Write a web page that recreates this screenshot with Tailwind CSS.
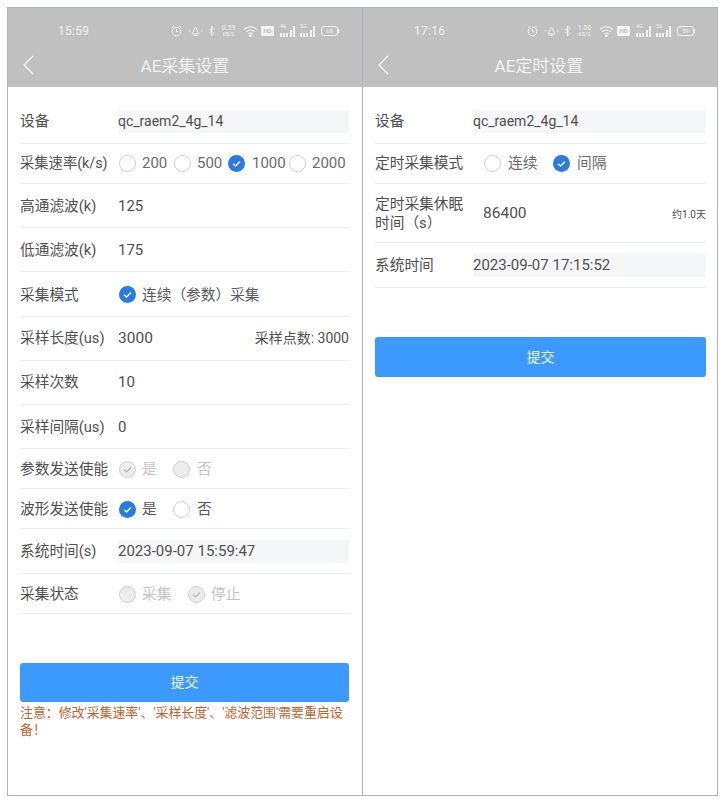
<!DOCTYPE html>
<html lang="zh">
<head>
<meta charset="utf-8">
<script src="https://cdn.jsdelivr.net/npm/@tailwindcss/browser@4"></script>
<title>AE</title>
</head>
<body class="bg-white">
<div class="flex w-[723px] h-[802px] pl-[7px] pt-[7px] font-['Roboto','Noto_Sans_CJK_SC',sans-serif] text-[14.7px] text-[#505050]">

<!-- LEFT PHONE -->
<section class="w-[355px] h-[789px] border border-[#aeb4bb] border-r-0 bg-white flex flex-col">
  <header class="bg-[#c0c0c0] h-[79px] shrink-0 text-[#f1f1f1]">
    <div class="flex items-center h-[44px] pl-[50px] pt-[1px]">
      <span class="text-[12px] w-[113px] tracking-[0.3px]">15:59</span>
      <div class="flex items-center h-[14px]">
        <svg class="w-[11px] h-[12px] mr-[6px]" viewBox="0 0 11 12" fill="none" stroke="#f1f1f1" stroke-width="1"><circle cx="5.500" cy="6.500" r="4.300"/><path d="M5.500 4v2.700h2M1 2.500 2.800 1M10 2.500 8.200 1"/></svg>
        <svg class="w-[15px] h-[12px] mr-[5px]" viewBox="0 0 15 12" fill="none" stroke="#f1f1f1" stroke-width="1"><path d="M4 9 7.500 2 11 9ZM1.500 5v2M13.500 5v2M6 10.500h3"/></svg>
        <svg class="w-[7px] h-[12px] mr-[5px]" viewBox="0 0 7 12" fill="none" stroke="#f1f1f1" stroke-width="1"><path d="M1 3.500 6 8.500 3.500 11V1L6 3.500 1 8.500"/></svg>
        <div class="w-[17px] mr-[6px] flex flex-col items-center leading-[6px] text-[7px]"><span>0.59</span><span class="text-[5px]">KB/S</span></div>
        <svg class="w-[15px] h-[12px] mr-[3px]" viewBox="0 0 15 12" fill="none" stroke="#f1f1f1" stroke-width="1.100"><path d="M1 4.500C4.500 1 10.500 1 14 4.500M3.200 6.800C5.500 4.600 9.500 4.600 11.800 6.800M5.400 9C6.500 8 8.500 8 9.600 9"/><circle cx="7.500" cy="10.800" r=".8" fill="#f1f1f1"/></svg>
        <div class="w-[13px] h-[10px] mr-[6px] bg-[#f1f1f1] rounded-[1px] flex items-center justify-center text-[6px] leading-none text-[#c0c0c0] font-bold">HD</div>
        <div class="w-[15px] h-[12px] mr-[5px] flex items-end gap-[1.5px] relative"><span class="absolute left-0 top-[-1px] text-[5px] leading-none">4G</span><i class="block w-[1.500px] h-[4px] bg-[#f1f1f1]"></i><i class="block w-[1.500px] h-[4px] bg-[#f1f1f1]"></i><i class="block w-[1.500px] h-[4px] bg-[#f1f1f1]"></i><i class="block w-[1.500px] h-[7px] bg-[#f1f1f1] ml-[1px]"></i><i class="block w-[1.500px] h-[11px] bg-[#f1f1f1]"></i></div>
        <div class="w-[15px] h-[12px] mr-[6px] flex items-end gap-[1.5px] relative"><span class="absolute left-0 top-[-1px] text-[5px] leading-none">5G</span><i class="block w-[1.500px] h-[4px] bg-[#f1f1f1]"></i><i class="block w-[1.500px] h-[4px] bg-[#f1f1f1]"></i><i class="block w-[1.500px] h-[4px] bg-[#f1f1f1]"></i><i class="block w-[1.500px] h-[7px] bg-[#f1f1f1] ml-[1px]"></i><i class="block w-[1.500px] h-[11px] bg-[#f1f1f1]"></i></div>
        <div class="w-[17px] h-[10px] border border-[#f1f1f1] rounded-[3px] flex items-center justify-center text-[6px] leading-none">68</div><i class="block w-[1px] h-[4px] bg-[#f1f1f1]"></i>
      </div>
    </div>
    <div class="relative flex items-center justify-center h-[27px] pt-[2px] text-[17px] leading-none">
      <svg class="absolute left-[15px] top-[3px] w-[11px] h-[20px]" viewBox="0 0 11 20" fill="none" stroke="#f5f5f5" stroke-width="1.300"><path d="M10 1 1 10l9 9"/></svg>
      <span>AE采集设置</span>
    </div>
  </header>
  <div class="pt-[13px] pl-[12px] pr-[13px] flex flex-col flex-1">
    <div class="flex items-center h-[44px] border-b border-[#eeeeee]"><span class="w-[98px] shrink-0">设备</span><div class="flex-1 h-[23px] bg-[#f5f6f8] flex items-center text-[14px]">qc_raem2_4g_14</div></div>
    <div class="flex items-center h-[40px] border-b border-[#eeeeee] text-[#6b6b6b] text-[15px]"><span class="w-[98px] shrink-0 text-[#505050] text-[14.300px]">采集速率(k/s)</span>
      <div class="flex items-center pl-[1px]">
        <i class="block w-[17px] h-[17px] rounded-full border border-[#cfcfcf] mr-[6px]"></i><span class="w-[32px]">200</span>
        <i class="block w-[17px] h-[17px] rounded-full border border-[#cfcfcf] mr-[6px]"></i><span class="w-[31px]">500</span>
        <svg class="w-[17px] h-[17px] mr-[7px]" viewBox="0 0 17 17"><circle cx="8.500" cy="8.500" r="8.500" fill="#2a7ae4"/><path d="M5 8.700l2.500 2.300L12 6.500" fill="none" stroke="#fff" stroke-width="1.400"/></svg><span class="w-[37px]">1000</span>
        <i class="block w-[17px] h-[17px] rounded-full border border-[#cfcfcf] mr-[6px]"></i><span>2000</span>
      </div>
    </div>
    <div class="flex items-center h-[44px] pt-[2px] border-b border-[#eeeeee]"><span class="w-[98px] shrink-0">高通滤波(k)</span><span class="text-[15px]">125</span></div>
    <div class="flex items-center h-[44px] pt-[2px] border-b border-[#eeeeee]"><span class="w-[98px] shrink-0">低通滤波(k)</span><span class="text-[15px]">175</span></div>
    <div class="flex items-center h-[45px] pt-[2px] border-b border-[#eeeeee]"><span class="w-[98px] shrink-0">采集模式</span>
      <div class="flex items-center pl-[1px]"><svg class="w-[17px] h-[17px] mr-[6px]" viewBox="0 0 17 17"><circle cx="8.500" cy="8.500" r="8.500" fill="#2a7ae4"/><path d="M5 8.700l2.500 2.300L12 6.500" fill="none" stroke="#fff" stroke-width="1.400"/></svg><span class="text-[#5a5a5a]">连续（参数）采集</span></div>
    </div>
    <div class="flex items-center h-[44px] border-b border-[#eeeeee]"><span class="w-[98px] shrink-0">采样长度(us)</span><span class="text-[15.500px]">3000</span><span class="ml-auto text-[14px]">采样点数: 3000</span></div>
    <div class="flex items-center h-[44px] border-b border-[#eeeeee]"><span class="w-[98px] shrink-0">采样次数</span><span class="text-[15px]">10</span></div>
    <div class="flex items-center h-[44px] pt-[2px] border-b border-[#eeeeee]"><span class="w-[98px] shrink-0">采样间隔(us)</span><span class="text-[15px]">0</span></div>
    <div class="flex items-center h-[40px] pt-[2px] border-b border-[#eeeeee]"><span class="w-[98px] shrink-0">参数发送使能</span>
      <div class="flex items-center pl-[1px] text-[#c4c4c4]">
        <svg class="w-[17px] h-[17px] mr-[6px]" viewBox="0 0 17 17"><circle cx="8.500" cy="8.500" r="8" fill="#ececec" stroke="#cfcfcf"/><path d="M5 8.700l2.500 2.300L12 6.500" fill="none" stroke="#b5b5b5" stroke-width="1.200"/></svg><span class="w-[31px]">是</span>
        <i class="block w-[17px] h-[17px] rounded-full border border-[#cfcfcf] bg-[#ececec] mr-[7px]"></i><span>否</span>
      </div>
    </div>
    <div class="flex items-center h-[40px] pt-[2px] border-b border-[#eeeeee]"><span class="w-[98px] shrink-0">波形发送使能</span>
      <div class="flex items-center pl-[1px] text-[#5a5a5a]">
        <svg class="w-[17px] h-[17px] mr-[6px]" viewBox="0 0 17 17"><circle cx="8.500" cy="8.500" r="8.500" fill="#2a7ae4"/><path d="M5 8.700l2.500 2.300L12 6.500" fill="none" stroke="#fff" stroke-width="1.400"/></svg><span class="w-[31px]">是</span>
        <i class="block w-[17px] h-[17px] rounded-full border border-[#cfcfcf] mr-[7px]"></i><span>否</span>
      </div>
    </div>
    <div class="flex items-center h-[45px] border-b border-[#eeeeee]"><span class="w-[98px] shrink-0">系统时间(s)</span><div class="flex-1 h-[23px] bg-[#f5f6f8] flex items-center text-[15px]">2023-09-07 15:59:47</div></div>
    <div class="flex items-center h-[40px] pt-[2px] border-b border-[#eeeeee]"><span class="w-[98px] shrink-0">采集状态</span>
      <div class="flex items-center pl-[1px] text-[#c4c4c4]">
        <i class="block w-[17px] h-[17px] rounded-full border border-[#cfcfcf] bg-[#ececec] mr-[6px]"></i><span class="w-[46px]">采集</span>
        <svg class="w-[17px] h-[17px] mr-[6px]" viewBox="0 0 17 17"><circle cx="8.500" cy="8.500" r="8" fill="#ececec" stroke="#cfcfcf"/><path d="M5 8.700l2.500 2.300L12 6.500" fill="none" stroke="#b5b5b5" stroke-width="1.200"/></svg><span>停止</span>
      </div>
    </div>
    <button class="mt-[49px] h-[39px] w-full shrink-0 bg-[#3c9aff] rounded-[3px] text-white/90 text-[14px]">提交</button>
    <p class="mt-[2px] text-[13px] leading-[17px] tracking-[-0.1px] text-[#c4622d]">注意：修改'采集速率'、'采样长度'、'滤波范围'需要重启设备！</p>
  </div>
</section>

<!-- RIGHT PHONE -->
<section class="w-[356px] h-[789px] border border-[#aeb4bb] bg-white flex flex-col">
  <header class="bg-[#c0c0c0] h-[79px] shrink-0 text-[#f1f1f1]">
    <div class="flex items-center h-[44px] pl-[51px] pt-[1px]">
      <span class="text-[12px] w-[113px] tracking-[0.3px]">17:16</span>
      <div class="flex items-center h-[14px]">
        <svg class="w-[11px] h-[12px] mr-[6px]" viewBox="0 0 11 12" fill="none" stroke="#f1f1f1" stroke-width="1"><circle cx="5.500" cy="6.500" r="4.300"/><path d="M5.500 4v2.700h2M1 2.500 2.800 1M10 2.500 8.200 1"/></svg>
        <svg class="w-[15px] h-[12px] mr-[5px]" viewBox="0 0 15 12" fill="none" stroke="#f1f1f1" stroke-width="1"><path d="M4 9 7.500 2 11 9ZM1.500 5v2M13.500 5v2M6 10.500h3"/></svg>
        <svg class="w-[7px] h-[12px] mr-[5px]" viewBox="0 0 7 12" fill="none" stroke="#f1f1f1" stroke-width="1"><path d="M1 3.500 6 8.500 3.500 11V1L6 3.500 1 8.500"/></svg>
        <div class="w-[17px] mr-[6px] flex flex-col items-center leading-[6px] text-[7px]"><span>1.00</span><span class="text-[5px]">KB/S</span></div>
        <svg class="w-[15px] h-[12px] mr-[3px]" viewBox="0 0 15 12" fill="none" stroke="#f1f1f1" stroke-width="1.100"><path d="M1 4.500C4.500 1 10.500 1 14 4.500M3.200 6.800C5.500 4.600 9.500 4.600 11.800 6.800M5.400 9C6.500 8 8.500 8 9.600 9"/><circle cx="7.500" cy="10.800" r=".8" fill="#f1f1f1"/></svg>
        <div class="w-[13px] h-[10px] mr-[6px] bg-[#f1f1f1] rounded-[1px] flex items-center justify-center text-[6px] leading-none text-[#c0c0c0] font-bold">HD</div>
        <div class="w-[15px] h-[12px] mr-[5px] flex items-end gap-[1.5px] relative"><span class="absolute left-0 top-[-1px] text-[5px] leading-none">4G</span><i class="block w-[1.500px] h-[4px] bg-[#f1f1f1]"></i><i class="block w-[1.500px] h-[4px] bg-[#f1f1f1]"></i><i class="block w-[1.500px] h-[4px] bg-[#f1f1f1]"></i><i class="block w-[1.500px] h-[7px] bg-[#f1f1f1] ml-[1px]"></i><i class="block w-[1.500px] h-[11px] bg-[#f1f1f1]"></i></div>
        <div class="w-[15px] h-[12px] mr-[6px] flex items-end gap-[1.5px] relative"><span class="absolute left-0 top-[-1px] text-[5px] leading-none">5G</span><i class="block w-[1.500px] h-[4px] bg-[#f1f1f1]"></i><i class="block w-[1.500px] h-[4px] bg-[#f1f1f1]"></i><i class="block w-[1.500px] h-[4px] bg-[#f1f1f1]"></i><i class="block w-[1.500px] h-[7px] bg-[#f1f1f1] ml-[1px]"></i><i class="block w-[1.500px] h-[11px] bg-[#f1f1f1]"></i></div>
        <div class="w-[17px] h-[10px] border border-[#f1f1f1] rounded-[3px] flex items-center justify-center text-[6px] leading-none">59</div><i class="block w-[1px] h-[4px] bg-[#f1f1f1]"></i>
      </div>
    </div>
    <div class="relative flex items-center justify-center h-[27px] pt-[2px] pr-[2px] text-[17px] leading-none">
      <svg class="absolute left-[15px] top-[3px] w-[11px] h-[20px]" viewBox="0 0 11 20" fill="none" stroke="#f5f5f5" stroke-width="1.300"><path d="M10 1 1 10l9 9"/></svg>
      <span>AE定时设置</span>
    </div>
  </header>
  <div class="pt-[13px] pl-[12px] pr-[11px] flex flex-col flex-1">
    <div class="flex items-center h-[44px] border-b border-[#eeeeee]"><span class="w-[98px] shrink-0">设备</span><div class="flex-1 h-[23px] bg-[#f5f6f8] flex items-center text-[14px]">qc_raem2_4g_14</div></div>
    <div class="flex items-center h-[40px] border-b border-[#eeeeee]"><span class="w-[109px] shrink-0">定时采集模式</span>
      <div class="flex items-center text-[#6b6b6b]">
        <i class="block w-[17px] h-[17px] rounded-full border border-[#cfcfcf] mr-[7px]"></i><span class="w-[45px]">连续</span>
        <svg class="w-[17px] h-[17px] mr-[7px]" viewBox="0 0 17 17"><circle cx="8.500" cy="8.500" r="8.500" fill="#2a7ae4"/><path d="M5 8.700l2.500 2.300L12 6.500" fill="none" stroke="#fff" stroke-width="1.400"/></svg><span>间隔</span>
      </div>
    </div>
    <div class="flex items-center h-[59px] pt-[2px] border-b border-[#eeeeee]"><span class="w-[108px] shrink-0 leading-[19px] pr-[8px]">定时采集休眠时间（s）</span><span class="text-[15.500px]">86400</span><span class="ml-auto text-[10px]">约1.0天</span></div>
    <div class="flex items-center h-[45px] border-b border-[#eeeeee]"><span class="w-[98px] shrink-0">系统时间</span><div class="flex-1 h-[24px] bg-[#f5f6f8] flex items-center text-[15px]">2023-09-07 17:15:52</div></div>
    <button class="mt-[49px] h-[40px] w-full shrink-0 bg-[#3c9aff] rounded-[3px] text-white/90 text-[14px]">提交</button>
  </div>
</section>

</div>
</body>
</html>
